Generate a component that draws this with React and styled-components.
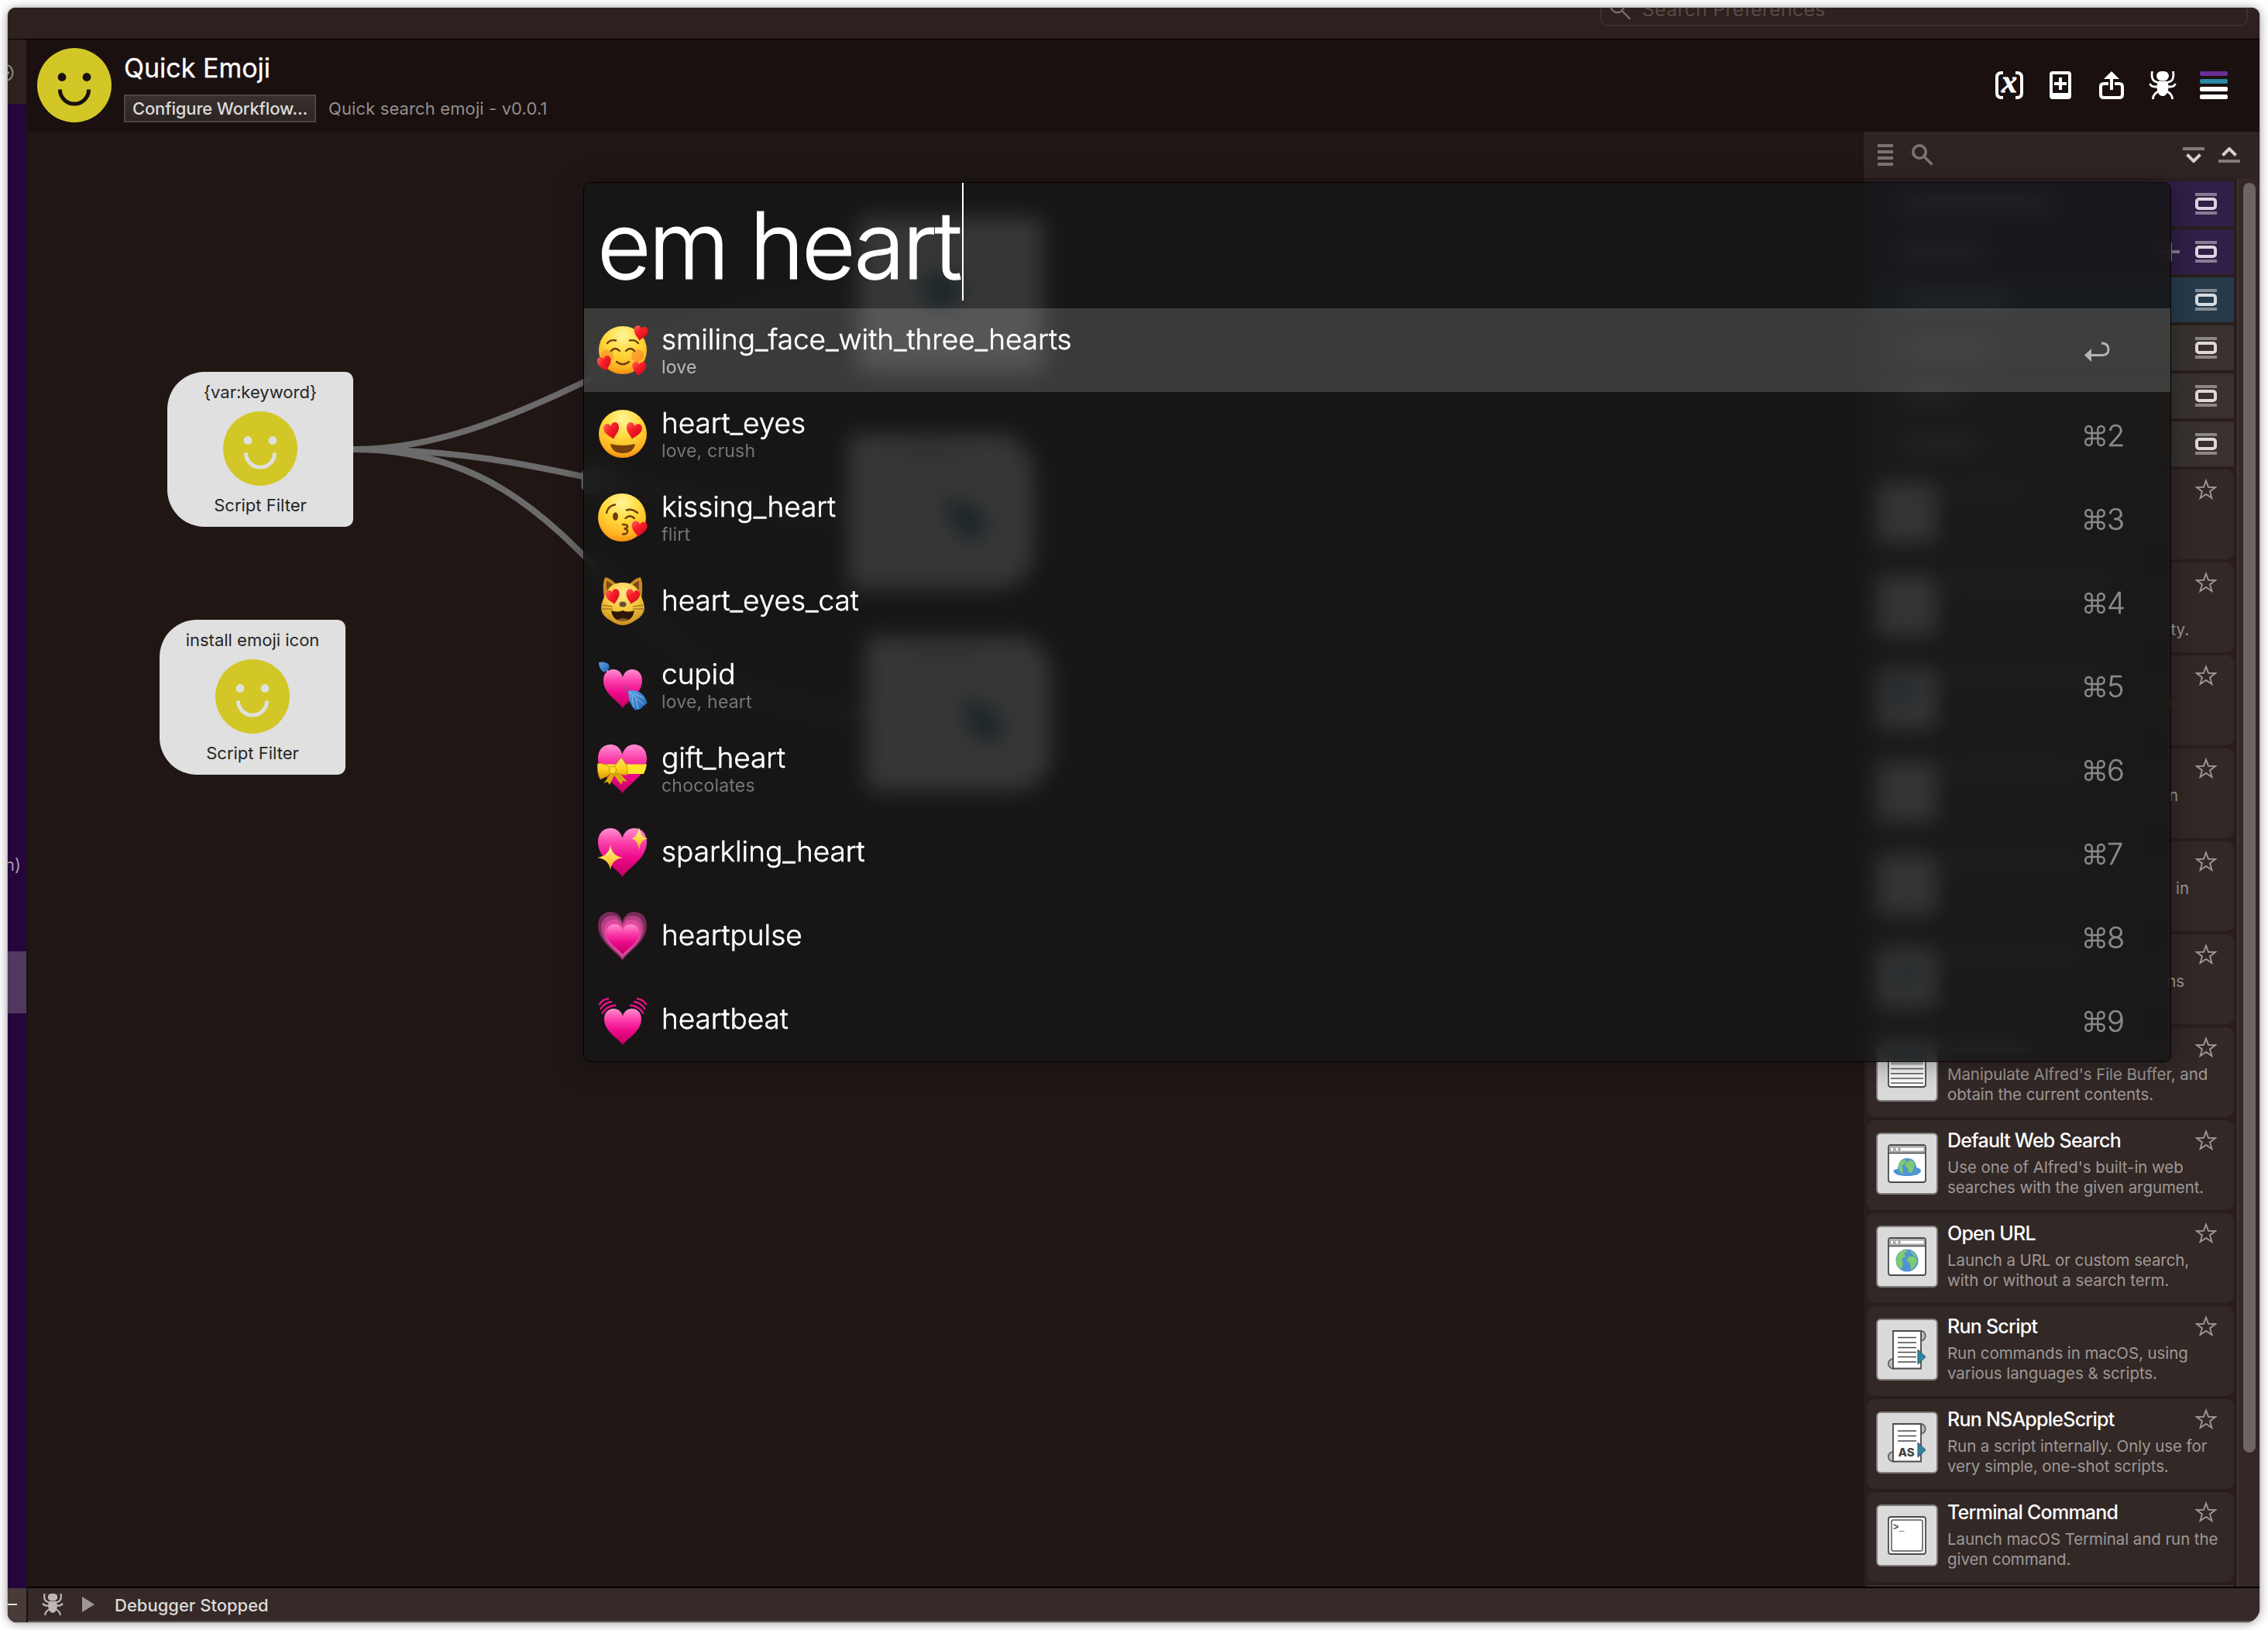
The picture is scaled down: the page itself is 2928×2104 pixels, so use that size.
import React from "react";
import styled, { createGlobalStyle } from "styled-components";

const GlobalStyle = createGlobalStyle`
  * { box-sizing: border-box; }
  body { margin: 0; background: #fff; }
`;

const Desktop = styled.div`
  position: relative;
  width: 2928px;
  height: 2104px;
  padding: 10px;
  overflow: hidden;
  background: #fff;
  font-family: Inter, "Liberation Sans", sans-serif;
`;

const Window = styled.div`
  display: flex;
  flex-direction: column;
  width: 2907px;
  height: 2084px;
  border-radius: 10px 10px 18px 12px;
  overflow: hidden;
  background: #201715;
  box-shadow: 0 0 2px rgba(0, 0, 0, 0.45), 0 1px 14px rgba(0, 0, 0, 0.4);
`;

const TopBar = styled.div`
  display: flex;
  flex: none;
  justify-content: flex-end;
  height: 41px;
  padding-right: 15px;
  overflow: hidden;
  background: #2d201e;
  border-bottom: 1px solid #000;
`;

const SearchField = styled.div`
  display: flex;
  align-items: center;
  gap: 14px;
  width: 836px;
  height: 56px;
  margin-top: -32px;
  padding: 12px 0 0 10px;
  border: 2px solid #3c302e;
  border-radius: 10px;
  color: #564a45;
  font-size: 25px;
  letter-spacing: 0.2px;
  line-height: 30px;
`;

const Main = styled.div`
  display: flex;
  flex: 1;
  min-height: 0;
`;

const Sidebar = styled.div`
  display: flex;
  flex-direction: column;
  width: 26px;
  background: #25053c;
  border-right: 2px solid #151413;
  overflow: hidden;
`;

const SidebarHead = styled.div`
  display: flex;
  flex: none;
  align-items: flex-start;
  height: 83px;
  padding-top: 31px;
  background: #2d201e;
`;

const SidebarLabel = styled.div`
  display: flex;
  justify-content: flex-end;
  width: 17px;
  margin-top: 968px;
  color: #a898b2;
  font-size: 22px;
  line-height: 28px;
`;

const SidebarSelection = styled.div`
  height: 80px;
  margin-top: 98px;
  background: #513860;
`;

const SidebarFoot = styled.div`
  height: 44px;
  margin-top: auto;
  padding-top: 20px;
  background: #483b38;
`;

const Dash = styled.div`
  width: 12px;
  height: 2px;
  background: #e4e0de;
`;

const Workspace = styled.div`
  display: flex;
  flex-direction: column;
  flex: 1;
  min-width: 0;
`;

const Header = styled.div`
  display: flex;
  flex: none;
  height: 119px;
  padding: 11px 41px 0 12px;
  background: #19100f;
`;

const HeaderText = styled.div`
  display: flex;
  flex-direction: column;
  gap: 14px;
  margin: 6px auto 0 16px;
`;

const Title = styled.div`
  color: #fff;
  font-size: 34px;
  line-height: 40px;
  -webkit-text-stroke: 0.3px #fff;
`;

const HeaderRow = styled.div`
  display: flex;
  align-items: center;
  gap: 16px;
`;

const ConfigureButton = styled.div`
  width: 248px;
  height: 36px;
  border: 2px solid #4b4544;
  background: linear-gradient(#37302e, #2c2523);
  color: #dedbda;
  font-size: 22px;
  font-weight: 500;
  letter-spacing: -0.15px;
  line-height: 32px;
  text-align: center;
  white-space: nowrap;
`;

const Subtitle = styled.div`
  color: #938e8d;
  font-size: 22px;
  letter-spacing: 0.12px;
  line-height: 28px;
`;

const HeaderIcons = styled.div`
  display: flex;
  gap: 30px;
  padding-top: 30px;
`;

const Body = styled.div`
  display: flex;
  flex: 1;
  min-height: 0;
`;

const Canvas = styled.div`
  position: relative;
  flex: 1;
  background: #201715;
`;

const Wires = styled.svg`
  position: absolute;
  left: 0;
  top: 0;
`;

const nodeCorners = {
  input: "48px 10px 10px 48px",
  output: "10px 48px 48px 10px",
  action: "10px",
};

const Node = styled.div`
  position: absolute;
  left: ${(p) => p.$x}px;
  top: ${(p) => p.$y}px;
  display: flex;
  flex-direction: column;
  align-items: center;
  justify-content: space-between;
  width: 240px;
  height: 200px;
  padding: 12px 0 14px;
  border-radius: ${(p) => nodeCorners[p.$kind]};
  background: #e0e0e0;
  color: #262626;
  font-size: 22px;
  line-height: 28px;
`;

const Panel = styled.div`
  display: flex;
  flex-direction: column;
  width: 511px;
  background: #291e1c;
`;

const PanelTools = styled.div`
  display: flex;
  flex: none;
  align-items: center;
  justify-content: space-between;
  height: 60px;
  padding: 0 25px 0 18px;
  background: #2e2423;
`;

const ToolGroup = styled.div`
  display: flex;
  align-items: center;
  gap: ${(p) => p.$gap}px;
`;

const Spring = styled.div`
  flex: 1;
`;

const PanelBody = styled.div`
  display: flex;
  flex: 1;
  min-height: 0;
`;

const PanelList = styled.div`
  display: flex;
  flex: 1;
  flex-direction: column;
  gap: 4px;
  padding: 4px 4px 0 4px;
  overflow: hidden;
`;

const ScrollTrack = styled.div`
  width: 29px;
  padding: 6px 0 0 6px;
  background: #322725;
  border-left: 2px solid #3f3432;
`;

const ScrollThumb = styled.div`
  width: 16px;
  height: 1639px;
  border-radius: 8px;
  background: #6e6462;
`;

const tones = {
  purple: "#301f46",
  blue: "#273a4a",
  brown: "linear-gradient(90deg, #38332f 85%, #3a302e 92%)",
};

const Category = styled.div`
  display: flex;
  flex: none;
  align-items: center;
  gap: 20px;
  height: 58px;
  padding: 0 22px 1px 46px;
  background: ${(p) => tones[p.$tone]};
`;

const Bar = styled.div`
  width: ${(p) => p.$w}px;
  height: ${(p) => p.$h || 14}px;
  border-radius: 4px;
  background: rgba(255, 255, 255, 0.36);
`;

const Card = styled.div`
  display: flex;
  flex: none;
  gap: 12px;
  height: 116px;
  padding: 16px 0 0 12px;
  border-radius: 10px;
  background: #322826;
`;

const CardText = styled.div`
  flex: 1;
  min-width: 0;
`;

const CardTitle = styled.div`
  display: flex;
  align-items: center;
  justify-content: space-between;
  height: 32px;
  margin: -6px 22px 0 0;
  color: #fff;
  font-size: 25px;
  font-weight: 500;
  letter-spacing: -0.75px;
  line-height: 32px;
`;

const CardLine = styled.div`
  height: 26px;
  color: #9e9896;
  font-size: 20.5px;
  letter-spacing: -0.08px;
  line-height: 26px;
  white-space: nowrap;
`;

const Lines = styled.div`
  margin-top: 6px;
`;

const Tail = styled.div`
  display: flex;
  justify-content: flex-end;
  width: ${(p) => p.$end}px;
`;

const StatusBar = styled.div`
  display: flex;
  flex: none;
  align-items: center;
  gap: 24px;
  height: 46px;
  padding-left: 18px;
  background: #352a27;
  border-top: 2px solid #000;
  border-bottom: 2px solid #5c514e;
`;

const StatusText = styled.div`
  padding: 2px 0 0 2px;
  color: #dedad8;
  font-size: 22px;
  font-weight: 500;
  line-height: 28px;
`;

const Popup = styled.div`
  position: absolute;
  left: 754px;
  top: 236px;
  width: 2048px;
  height: 1134px;
  border-radius: 8px;
  overflow: hidden;
  background: rgba(21, 22, 22, 0.84);
  backdrop-filter: blur(14px);
`;

const PopupShadow = styled.div`
  position: absolute;
  left: 754px;
  top: 236px;
  width: 2048px;
  height: 1134px;
  border-radius: 8px;
  box-shadow: 0 0 0 1px rgba(0, 0, 0, 0.85), 0 4px 34px rgba(0, 0, 0, 0.35);
`;

const Query = styled.div`
  display: flex;
  height: 162px;
  padding-left: 17px;
  color: #fff;
  font-size: 120px;
  font-weight: 300;
  letter-spacing: -3.4px;
  line-height: 162px;
  white-space: pre;
  word-spacing: -1px;
  -webkit-text-stroke: 1.2px #fff;
`;

const Caret = styled.div`
  width: 2px;
  height: 152px;
  margin-left: 3px;
  background: #fff;
`;

const Row = styled.div`
  display: flex;
  align-items: center;
  height: 108px;
  padding-left: 17px;
  background: ${(p) => (p.$selected ? "rgba(255, 255, 255, 0.155)" : "transparent")};
`;

const RowText = styled.div`
  flex: 1;
  padding: 0 0 ${(p) => (p.$single ? 3 : 0)}px 17px;
`;

const RowTitle = styled.div`
  color: #fff;
  font-size: 37px;
  font-weight: 300;
  letter-spacing: -0.05px;
  line-height: 44px;
  -webkit-text-stroke: 0.5px #fff;
`;

const RowSub = styled.div`
  color: ${(p) => (p.$selected ? "#b8b8b8" : "#767676")};
  font-size: 23px;
  letter-spacing: 0.2px;
  line-height: 28px;
`;

const Shortcut = styled.div`
  display: flex;
  align-items: center;
  width: 111px;
  padding-top: 4px;
  color: #8a8a8a;
  font-size: 38px;
  font-weight: 300;
  line-height: 44px;
  -webkit-text-stroke: 0.4px #8a8a8a;
`;

const CommandKey = styled.span`
  margin: 0 -2px 0 -4px;
  font-size: 35px;
`;

const HiddenSvg = styled.svg`
  position: absolute;
`;

const Smiley = ({ hole }) => (
  <svg width="96" height="96" viewBox="0 0 96 96">
    <circle cx="48" cy="48" r="48" fill="#d2c726" />
    <circle cx="32" cy="37.5" r="5.4" fill={hole} />
    <circle cx="64" cy="37.5" r="5.4" fill={hole} />
    <path d="M29.4 53.5a18.6 18.6 0 0 0 37.2 0" fill="none" stroke={hole} strokeWidth="5" />
  </svg>
);

const Magnifier = ({ color, w }) => (
  <svg width="28" height="28" viewBox="0 0 28 28" fill="none" stroke={color} strokeWidth={w}>
    <circle cx="10" cy="10" r="8.2" />
    <path d="M16 16L26.5 26.5" />
  </svg>
);

const VariableIcon = () => (
  <svg width="36" height="36" viewBox="0 0 36 36">
    <path d="M10 2H8Q2 2 2 8V28Q2 34 8 34H10M26 2H28Q34 2 34 8V28Q34 34 28 34H26" fill="none" stroke="#fff" strokeWidth="4" />
    <text x="18" y="27" textAnchor="middle" fill="#fff" stroke="#fff" strokeWidth="0.8" fontFamily="Liberation Serif, serif" fontStyle="italic" fontWeight="700" fontSize="40">x</text>
  </svg>
);

const AddCardIcon = () => (
  <svg width="36" height="36" viewBox="0 0 36 36">
    <path fillRule="evenodd" fill="#fff" d="M8 0H28Q32 0 32 4V32Q32 36 28 36H8Q4 36 4 32V4Q4 0 8 0ZM8 4V28H28V4Z" />
    <path d="M18 8V24M10 16H26" stroke="#fff" strokeWidth="4" />
  </svg>
);

const ShareIcon = () => (
  <svg width="36" height="36" viewBox="0 0 36 36">
    <path d="M14 16H8Q4 16 4 20V30Q4 34 8 34H28Q32 34 32 30V20Q32 16 28 16H22" fill="none" stroke="#fff" strokeWidth="4" />
    <path d="M18 24V6" stroke="#fff" strokeWidth="4" />
    <path d="M18 0L28 10H8Z" fill="#fff" />
  </svg>
);

const BugIcon = ({ size, color }) => (
  <svg width={size} height={size} viewBox="0 0 36 36">
    <rect x="10" y="0" width="16" height="12" rx="6" fill={color} />
    <path d="M13 12.5H23Q26 16 25.5 22Q24 32 18 32Q12 32 10.500 22Q10 16 13 12.5Z" fill={color} />
    <path
      d="M4.5 0Q3 9 7 12.5L13 15M31.5 0Q33 9 29 12.5L23 15M1.5 16Q4 21.5 12 19.5M34.5 16Q32 21.5 24 19.5M5.5 36Q5 30 13 25.5M30.5 36Q31 30 23 25.5"
      fill="none"
      stroke={color}
      strokeWidth="2.8"
    />
  </svg>
);

const PaletteIcon = () => (
  <svg width="36" height="36" viewBox="0 0 36 36">
    <rect width="36" height="6" rx="2" fill="#6b2d96" />
    <rect y="10" width="36" height="6" rx="2" fill="#2b87a3" />
    <rect y="20" width="36" height="6" rx="2" fill="#fff" />
    <rect y="30" width="36" height="6" rx="2" fill="#fff" />
  </svg>
);

const ListIcon = () => (
  <svg width="20" height="28" viewBox="0 0 20 28" fill="#7c7472">
    <path d="M0 0H20V4H0ZM0 8H20V12H0ZM0 16H20V20H0ZM0 24H20V28H0Z" />
  </svg>
);

const CollapseIcon = () => (
  <svg width="28" height="20" viewBox="0 0 28 20">
    <rect width="28" height="4" fill="#827b79" />
    <path d="M5.5 9.5L14 18L22.5 9.5" fill="none" stroke="#d3cfcd" strokeWidth="4" />
  </svg>
);

const ExpandIcon = () => (
  <svg width="28" height="20" viewBox="0 0 28 20">
    <rect y="16" width="28" height="4" fill="#827b79" />
    <path d="M5.5 10.5L14 2L22.5 10.5" fill="none" stroke="#d3cfcd" strokeWidth="4" />
  </svg>
);

const FoldIcon = () => (
  <svg width="28" height="28" viewBox="0 0 28 28">
    <path d="M0 0H28V4H0ZM0 24H28V28H0Z" fill="#fff" opacity="0.42" />
    <rect x="2" y="8" width="24" height="12" rx="3" fill="none" stroke="#fff" strokeOpacity="0.82" strokeWidth="4" />
  </svg>
);

const PlusIcon = () => (
  <svg width="24" height="24" viewBox="0 0 24 24" opacity="0.42">
    <path d="M12 0V24M0 12H24" stroke="#fff" strokeWidth="4" />
  </svg>
);

const StarIcon = () => (
  <svg width="28" height="28" viewBox="0 0 28 28">
    <path
      d="M14 2.5L17 10.7L26 11L19 16.4L21.5 25L14 20L6.5 25L9 16.4L2 11L11 10.7Z"
      fill="none"
      stroke="#9c9694"
      strokeWidth="1.9"
    />
  </svg>
);

const Chrome = () => (
  <>
    <rect x="16" y="16" width="48" height="48" rx="3" fill="#fff" stroke="#4a4a4a" strokeWidth="1.8" />
    <path d="M17 17H63V26H17Z" fill="#b9b9b9" />
    <path d="M16 26.5H64" stroke="#4a4a4a" strokeWidth="1.6" />
    <path d="M18.5 19H22.5V24H18.5ZM25 19H29V24H25ZM31 19H62V24H31Z" fill="#fff" stroke="#8a8a8a" strokeWidth="0.8" />
  </>
);

const Scroll = ({ short }) => (
  <>
    <path d="M58 16H59A6.5 6.5 0 0 1 59 28.5H58ZM23 52H22A6 6 0 0 0 22 64.5H23Z" fill="#b9b9b9" stroke="#555" strokeWidth="1.5" />
    <path d="M22 16H58V64.5H22Z" fill="#fff" stroke="#4a4a4a" strokeWidth="1.8" />
    <path d={short ? "M28 25H52M28 31.5H52M28 38H52" : "M28 24.5H52M28 31H52M28 37.5H52M28 43.5H52M28 49.5H52M28 56H52"} stroke="#4a4a4a" strokeWidth="1.5" />
    {short && (
      <text x="39" y="57.5" textAnchor="middle" fill="#444" fontFamily="Inter, sans-serif" fontWeight="800" fontSize="15">AS</text>
    )}
    <path d="M54 40L64 49.5L54 59Z" fill="#2b87a3" stroke="#38444c" strokeWidth="1" />
  </>
);

const tileArt = {
  blank: <rect x="22" y="18" width="36" height="44" rx="3" fill="#cfd0d0" />,
  blue: (
    <>
      <rect x="22" y="22" width="36" height="40" fill="#ccc" />
      <circle cx="32" cy="30" r="14" fill="#2f6fb0" />
    </>
  ),
  teal: (
    <>
      <rect x="22" y="22" width="36" height="40" fill="#ccc" />
      <circle cx="38" cy="36" r="13" fill="#3c7a93" />
    </>
  ),
  doc: (
    <>
      <rect x="16" y="8" width="48" height="53" rx="3" fill="#fff" stroke="#4a4a4a" strokeWidth="1.8" />
      <path d="M19 12H61V25H19Z" fill="#5b8597" />
      <path d="M19 25H61V32.5H19Z" fill="#b3b3b3" />
      <path d="M19 37.5H61M19 43.7H61M19 50H61M19 56H61" stroke="#5a5a5a" strokeWidth="1.5" />
    </>
  ),
  hat: (
    <>
      <Chrome />
      <path d="M28 47Q29 33 40 33Q51 33 52 45Q58 46 58 49.5Q56 56 40 56Q24 56 22.5 49.5Q23 47 28 47Z" fill="#4f94d4" />
      <path d="M29 42Q30 36 37 34.5Q40 36 37 40L33 43L35 49L34 54L30 49ZM38 40Q43 34 48 37Q51 40 49 44L46 52L42 51L41 46L37 43Z" fill="#7fcb6b" />
    </>
  ),
  globe: (
    <>
      <Chrome />
      <circle cx="40" cy="45" r="14.5" fill="#4f94d4" />
      <path d="M27 40Q30 33 37 31L41 33L36 36L38 40L33 43L35 50L32 56Q26 52 26 45ZM43 32Q51 35 54 42L48 38ZM41 41Q46 38 50 41L53 44Q52 53 45 57L44 49L40 46Z" fill="#7fcb6b" />
    </>
  ),
  script: <Scroll />,
  applescript: <Scroll short />,
  terminal: (
    <>
      <rect x="16" y="16" width="48" height="48" rx="3" fill="#fff" stroke="#4a4a4a" strokeWidth="1.8" />
      <rect x="20" y="20" width="40" height="40" rx="2" fill="#fff" stroke="#555" strokeWidth="1.5" />
      <text x="22" y="33" fill="#444" fontFamily="Liberation Mono, monospace" fontWeight="700" fontSize="12">&gt;_</text>
    </>
  ),
};

const Tile = ({ art }) => (
  <svg width="80" height="80" viewBox="0 0 80 80">
    <rect x="1" y="1" width="78" height="78" rx="5" fill="#dadada" stroke="#7d7b7a" strokeWidth="2" />
    {tileArt[art]}
  </svg>
);

const HEART = "M32 62C25 51 2 40 2 19C2 8 9 2 17.5 2C25 2 30 7 32 14C34 7 39 2 46.5 2C55 2 62 8 62 19C62 40 39 51 32 62Z";

const EmojiDefs = () => (
  <HiddenSvg width="0" height="0">
    <defs>
      <radialGradient id="face" cx="0.5" cy="0.2" r="0.82">
        <stop offset="0" stopColor="#fff59a" />
        <stop offset="0.45" stopColor="#ffd93b" />
        <stop offset="0.8" stopColor="#ffb522" />
        <stop offset="1" stopColor="#ef8a12" />
      </radialGradient>
      <linearGradient id="pink" x1="0" y1="0" x2="0" y2="1">
        <stop offset="0" stopColor="#ff8fd0" />
        <stop offset="0.3" stopColor="#fb3fab" />
        <stop offset="0.6" stopColor="#ee0a8c" />
        <stop offset="1" stopColor="#c00060" />
      </linearGradient>
      <linearGradient id="red" x1="0" y1="0" x2="1" y2="1">
        <stop offset="0" stopColor="#ff6a62" />
        <stop offset="0.4" stopColor="#f81e26" />
        <stop offset="1" stopColor="#c9061c" />
      </linearGradient>
      <linearGradient id="gold" x1="0" y1="0" x2="0" y2="1">
        <stop offset="0" stopColor="#ffe36a" />
        <stop offset="0.5" stopColor="#ffd21f" />
        <stop offset="1" stopColor="#d99a06" />
      </linearGradient>
      <linearGradient id="spark" x1="0" y1="0" x2="0" y2="1">
        <stop offset="0" stopColor="#fff3a0" />
        <stop offset="0.5" stopColor="#ffd84a" />
        <stop offset="1" stopColor="#f9a51b" />
      </linearGradient>
      <radialGradient id="cat" cx="0.5" cy="0.25" r="0.8">
        <stop offset="0" stopColor="#ffe98a" />
        <stop offset="0.5" stopColor="#f5c93e" />
        <stop offset="1" stopColor="#c4861c" />
      </radialGradient>
      <linearGradient id="blue" x1="0" y1="0" x2="1" y2="1">
        <stop offset="0" stopColor="#5fa4e2" />
        <stop offset="1" stopColor="#1f62b4" />
      </linearGradient>
    </defs>
  </HiddenSvg>
);

const Heart = ({ x, y, w, h, fill, turn = 0 }) => (
  <g transform={`translate(${x} ${y}) scale(${w / 60} ${(h || w) / 60}) rotate(${turn} 30 30) translate(-2 -2)`}>
    <path d={HEART} fill={fill} />
  </g>
);

const brown = { fill: "none", stroke: "#6d3d0c", strokeWidth: 2.4, strokeLinecap: "round" };

const emojiArt = {
  hearts: (
    <>
      <circle cx="33" cy="33" r="31" fill="url(#face)" />
      <circle cx="13" cy="40" r="8" fill="#f5702a" opacity="0.4" />
      <circle cx="52" cy="40" r="8" fill="#f5702a" opacity="0.45" />
      <path d="M13 24Q17 19 24 20.5M42 20.5Q49 19 53 24M18 34Q23 28 29 34M37 34Q43 28 48 34M25 48Q33 54.5 41 48" {...brown} />
      <Heart x={47} y={2} w={18} h={19} fill="url(#red)" turn={10} />
      <Heart x={0.5} y={41} w={18} h={19} fill="url(#red)" turn={-12} />
      <Heart x={45} y={48} w={18} fill="url(#red)" turn={4} />
    </>
  ),
  eyes: (
    <>
      <circle cx="33" cy="33" r="31" fill="url(#face)" />
      <Heart x={9} y={19} w={20} h={21} fill="url(#red)" turn={-12} />
      <Heart x={37} y={19} w={20} h={21} fill="url(#red)" turn={12} />
      <path d="M17 46Q33 50 49 46Q47 58 33 58Q19 58 17 46Z" fill="#7a420b" />
    </>
  ),
  kiss: (
    <>
      <circle cx="32" cy="33" r="31" fill="url(#face)" />
      <path d="M12 27Q14 18 23 16.5M38 23.5Q45 21 52 27M36.5 34Q42 28.5 48 34" {...brown} />
      <path d="M33 42Q40 42 39 45Q38 47.5 34.5 47.5Q40 48 39 51.5Q38 55 33 54.5" {...brown} />
      <ellipse cx="23.5" cy="31.5" rx="3.5" ry="5.2" fill="#6d3d0c" />
      <Heart x={44} y={38} w={20} fill="url(#red)" turn={8} />
    </>
  ),
  cat: (
    <>
      <path d="M9 30Q6 8 10.5 2Q19 4 27 14ZM57 30Q60 8 55.5 2Q47 4 39 14Z" fill="#c98a25" />
      <path d="M13 20Q11 11 12.5 7Q18 9 22 14ZM53 20Q55 11 53.5 7Q48 9 44 14Z" fill="#7d4a14" />
      <path d="M33 9Q50 9 55 24Q61 34 61 43Q60 52 49 58Q40 64 33 64Q26 64 17 58Q6 52 5 43Q5 34 11 24Q16 9 33 9Z" fill="url(#cat)" />
      <Heart x={11.5} y={18} w={18} h={19} fill="url(#red)" turn={-12} />
      <Heart x={36.5} y={18} w={18} h={19} fill="url(#red)" turn={12} />
      <ellipse cx="33" cy="37" rx="4.5" ry="3.6" fill="#6b4a33" />
      <path d="M7 38L20 40M6 43L20 43M59 38L46 40M60 43L46 43" stroke="#8d5f1c" strokeWidth="1" />
      <path d="M18 45Q26 48 33 45Q40 48 48 45Q46 58.5 33 58.5Q20 58.5 18 45Z" fill="#2d1707" />
      <path d="M26 56.5Q33 53.5 40 56.5Q37 58.5 33 58.5Q29 58.5 26 56.5Z" fill="#8a5a32" />
    </>
  ),
  cupid: (
    <>
      <path d="M8 10L16 18" stroke="#a9a3ad" strokeWidth="2" />
      <path d="M2 4Q11 2 15 7L15.5 12L9 17Q2 13 2 4Z" fill="url(#blue)" />
      <Heart x={8} y={13} w={50} h={50} fill="url(#pink)" />
      <path d="M33 34L44 46" stroke="#a04a86" strokeWidth="2" />
      <path d="M40 41Q49 38 57 44Q63 49 64.5 57L60 59Q58 65 49 65.5Q40 57 40 41Z" fill="url(#blue)" />
      <path d="M41 42L62 60M45 47L47 62M50 51L53 64M47 44L60 50" stroke="#9ccbf7" strokeWidth="0.8" />
    </>
  ),
  gift: (
    <>
      <Heart x={1} y={2} w={63} h={63} fill="url(#pink)" />
      <path d="M1 27.5H64Q63 34 60 40H6Q2 34 1 27.5Z" fill="#ffe629" />
      <path d="M19 34Q30 36 30 40L39 50L33 49L31 54L22 42L16 54L13 50L8 52Q14 46 19 34Z" fill="#d8a90a" />
      <path d="M20 34Q8 24 0 27Q0 40 4 47Q13 44 20 37Q27 42 39 41Q40 28 31 19Q26 24 20 34Z" fill="url(#gold)" stroke="#b98304" strokeWidth="0.8" />
      <ellipse cx="20" cy="35" rx="4.5" ry="5" fill="#ffdc2c" stroke="#b98304" strokeWidth="0.8" />
    </>
  ),
  sparkling: (
    <>
      <Heart x={1} y={2} w={63} h={63} fill="url(#pink)" />
      <path d="M17 24Q19 38 33 40Q19 42 17 56Q15 42 0 40Q15 38 17 24Z" fill="url(#spark)" />
      <path d="M54 1Q55.5 13 65 15.5Q55.5 17 54 30Q52.5 17 44 15.5Q52.5 13 54 1Z" fill="url(#spark)" />
    </>
  ),
  pulse: (
    <>
      <Heart x={1} y={2} w={63} h={63} fill="#7a2a58" />
      <Heart x={5} y={7} w={55} h={56} fill="#b04282" />
      <Heart x={9} y={12} w={48} h={49} fill="#e0489f" />
      <Heart x={12} y={18} w={42} h={39} fill="url(#pink)" />
    </>
  ),
  beat: (
    <>
      <path
        d="M2.5 14Q6 7 15 6M4 20Q9 11 19 10M6 25.5Q12 15.5 24 14.5M63.5 14Q60 7 51 6M62 20Q57 11 47 10M60 25.5Q54 15.5 42 14.5"
        fill="none"
        stroke="#e8128c"
        strokeWidth="2.3"
      />
      <Heart x={9} y={19} w={48} h={47} fill="url(#pink)" />
    </>
  ),
};

const Emoji = ({ art }) => (
  <svg width="66" height="66" viewBox="0 0 66 66">{emojiArt[art]}</svg>
);

const ReturnIcon = () => (
  <svg width="34" height="26" viewBox="0 0 34 26">
    <path d="M22 2Q31 2 31 10Q31 17.5 23 17.5H6" fill="none" stroke="#b4b4b4" strokeWidth="2.8" />
    <path d="M0 17.5L9 9V26Z" fill="#b4b4b4" />
  </svg>
);

const results = [
  ["hearts", "smiling_face_with_three_hearts", "love"],
  ["eyes", "heart_eyes", "love, crush"],
  ["kiss", "kissing_heart", "flirt"],
  ["cat", "heart_eyes_cat"],
  ["cupid", "cupid", "love, heart"],
  ["gift", "gift_heart", "chocolates"],
  ["sparkling", "sparkling_heart"],
  ["pulse", "heartpulse"],
  ["beat", "heartbeat"],
];

const categories = [
  { tone: "purple", w: 190 },
  { tone: "purple", w: 100, plus: true },
  { tone: "blue", w: 140 },
  { tone: "brown", w: 120 },
  { tone: "brown", w: 80 },
  { tone: "brown", w: 100 },
];

const coveredCards = [
  { art: "blank", w: 100 },
  { art: "blank", w: 210, second: "ty.", end: 312 },
  { art: "blue", w: 200, first: "n", end: 290 },
  { art: "blank", w: 170, first: "n", end: 298 },
  { art: "blank", w: 170, first: "in", end: 312 },
  { art: "teal", w: 170, first: "ns", end: 306 },
];

const cards = [
  { art: "hat", title: "Default Web Search", lines: ["Use one of Alfred's built-in web", "searches with the given argument."] },
  { art: "globe", title: "Open URL", lines: ["Launch a URL or custom search,", "with or without a search term."] },
  { art: "script", title: "Run Script", lines: ["Run commands in macOS, using", "various languages & scripts."] },
  { art: "applescript", title: "Run NSAppleScript", lines: ["Run a script internally. Only use for", "very simple, one-shot scripts."] },
  { art: "terminal", title: "Terminal Command", lines: ["Launch macOS Terminal and run the", "given command."] },
];

const CopyArt = () => (
  <svg width="240" height="174" viewBox="0 0 240 174">
    <path d="M60 14H150" stroke="#b4b4b4" strokeWidth="12" />
    <path d="M120 66L176 92L172 126L142 116Z" fill="#206078" />
  </svg>
);

export default function App() {
  return (
    <Desktop>
      <GlobalStyle />
      <EmojiDefs />
      <Window>
        <TopBar>
          <SearchField>
            <Magnifier color="#7a706e" w={2.2} />
            Search Preferences
          </SearchField>
        </TopBar>
        <Main>
          <Sidebar>
            <SidebarHead>
              <svg width="10" height="24" viewBox="0 0 10 24">
                <circle cx="-4" cy="12" r="10.5" fill="none" stroke="#8e8684" strokeWidth="2" />
                <circle cx="0" cy="12" r="2" fill="#8e8684" />
              </svg>
            </SidebarHead>
            <SidebarLabel>n)</SidebarLabel>
            <SidebarSelection />
            <SidebarFoot>
              <Dash />
            </SidebarFoot>
          </Sidebar>
          <Workspace>
            <Header>
              <Smiley hole="#19100f" />
              <HeaderText>
                <Title>Quick Emoji</Title>
                <HeaderRow>
                  <ConfigureButton>Configure Workflow...</ConfigureButton>
                  <Subtitle>Quick search emoji - v0.0.1</Subtitle>
                </HeaderRow>
              </HeaderText>
              <HeaderIcons>
                <VariableIcon />
                <AddCardIcon />
                <ShareIcon />
                <BugIcon size={36} color="#fff" />
                <PaletteIcon />
              </HeaderIcons>
            </Header>
            <Body>
              <Canvas>
                <Wires width="2370" height="1878" viewBox="36 170 2370 1878" fill="none" stroke="#6b6b6b" strokeWidth="8">
                  <path d="M456 580C690 580 873 380 1107 380" />
                  <path d="M456 580C728 580 823 660 1095 660" />
                  <path d="M456 580C786 580 787 921 1117 921" />
                  <rect x="752" y="604" width="44" height="32" rx="10" fill="#4d5552" strokeWidth="3" />
                </Wires>
                <Node $x={180} $y={310} $kind="input">
                  {"{var:keyword}"}
                  <Smiley hole="#e0e0e0" />
                  Script Filter
                </Node>
                <Node $x={170} $y={630} $kind="input">
                  install emoji icon
                  <Smiley hole="#e0e0e0" />
                  Script Filter
                </Node>
                <Node $x={1071} $y={110} $kind="action">
                  <svg width="240" height="174" viewBox="0 0 240 174">
                    <circle cx="108" cy="82" r="25" fill="#2f7389" />
                  </svg>
                </Node>
                <Node $x={1059} $y={390} $kind="output">
                  <CopyArt />
                </Node>
                <Node $x={1081} $y={651} $kind="output">
                  <CopyArt />
                </Node>
              </Canvas>
              <Panel>
                <PanelTools>
                  <ToolGroup $gap={24}>
                    <ListIcon />
                    <Magnifier color="#7c7472" w={3.6} />
                  </ToolGroup>
                  <ToolGroup $gap={18}>
                    <CollapseIcon />
                    <ExpandIcon />
                  </ToolGroup>
                </PanelTools>
                <PanelBody>
                  <PanelList>
                    {categories.map((c, i) => (
                      <Category key={i} $tone={c.tone}>
                        <Bar $w={c.w} $h={18} />
                        <Spring />
                        {c.plus && <PlusIcon />}
                        <FoldIcon />
                      </Category>
                    ))}
                    {coveredCards.map((c, i) => (
                      <Card key={i}>
                        <Tile art={c.art} />
                        <CardText>
                          <CardTitle>
                            <Bar $w={c.w} />
                            <StarIcon />
                          </CardTitle>
                          <Lines>
                            <CardLine>{c.first && <Tail $end={c.end}>{c.first}</Tail>}</CardLine>
                            <CardLine>{c.second && <Tail $end={c.end}>{c.second}</Tail>}</CardLine>
                          </Lines>
                        </CardText>
                      </Card>
                    ))}
                    <Card>
                      <Tile art="doc" />
                      <CardText>
                        <CardTitle>
                          <Bar $w={110} />
                          <StarIcon />
                        </CardTitle>
                        <Lines>
                          <CardLine>Manipulate Alfred's File Buffer, and</CardLine>
                          <CardLine>obtain the current contents.</CardLine>
                        </Lines>
                      </CardText>
                    </Card>
                    {cards.map((c) => (
                      <Card key={c.title}>
                        <Tile art={c.art} />
                        <CardText>
                          <CardTitle>
                            {c.title}
                            <StarIcon />
                          </CardTitle>
                          <Lines>
                            {c.lines.map((l) => (
                              <CardLine key={l}>{l}</CardLine>
                            ))}
                          </Lines>
                        </CardText>
                      </Card>
                    ))}
                    <Category $tone="brown" />
                  </PanelList>
                  <ScrollTrack>
                    <ScrollThumb />
                  </ScrollTrack>
                </PanelBody>
              </Panel>
            </Body>
            <StatusBar>
              <BugIcon size={28} color="#bdb8b6" />
              <svg width="16" height="20" viewBox="0 0 16 20">
                <path d="M0 0L16 10L0 20Z" fill="#9d9795" />
              </svg>
              <StatusText>Debugger Stopped</StatusText>
            </StatusBar>
          </Workspace>
        </Main>
      </Window>
      <PopupShadow />
      <Popup>
        <Query>
          em heart
          <Caret />
        </Query>
        {results.map(([art, title, sub], i) => (
          <Row key={title} $selected={i === 0}>
            <Emoji art={art} />
            <RowText $single={!sub}>
              <RowTitle>{title}</RowTitle>
              {sub && <RowSub $selected={i === 0}>{sub}</RowSub>}
            </RowText>
            <Shortcut>
              {i === 0 ? (
                <ReturnIcon />
              ) : (
                <>
                  <CommandKey>⌘</CommandKey>
                  {i + 1}
                </>
              )}
            </Shortcut>
          </Row>
        ))}
      </Popup>
    </Desktop>
  );
}
